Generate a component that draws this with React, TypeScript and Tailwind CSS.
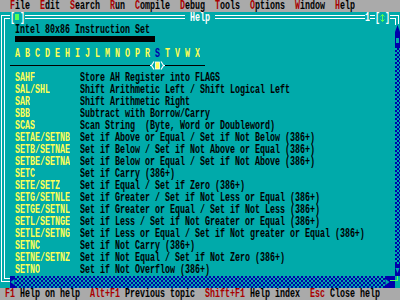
import React from "react";

function T({ children, className = "" }: { children: React.ReactNode; className?: string }) {
  return (
    <span
      className={`inline-block align-top whitespace-pre mt-[1.86px] h-[8.28px] leading-[8.28px] scale-y-[1.45] ${className}`}
    >
      {children}
    </span>
  );
}

function R({ children }: { children: React.ReactNode }) {
  return <span className="text-[#aa0000]">{children}</span>;
}

const entries: [string, string][] = [
  ["SAHF", "Store AH Register into FLAGS"],
  ["SAL/SHL", "Shift Arithmetic Left / Shift Logical Left"],
  ["SAR", "Shift Arithmetic Right"],
  ["SBB", "Subtract with Borrow/Carry"],
  ["SCAS", "Scan String  (Byte, Word or Doubleword)"],
  ["SETAE/SETNB", "Set if Above or Equal / Set if Not Below (386+)"],
  ["SETB/SETNAE", "Set if Below / Set if Not Above or Equal (386+)"],
  ["SETBE/SETNA", "Set if Below or Equal / Set if Not Above (386+)"],
  ["SETC", "Set if Carry (386+)"],
  ["SETE/SETZ", "Set if Equal / Set if Zero (386+)"],
  ["SETG/SETNLE", "Set if Greater / Set if Not Less or Equal (386+)"],
  ["SETGE/SETNL", "Set if Greater or Equal / Set if Not Less (386+)"],
  ["SETL/SETNGE", "Set if Less / Set if Not Greater or Equal (386+)"],
  ["SETLE/SETNG", "Set if Less or Equal / Set if Not greater or Equal (386+)"],
  ["SETNC", "Set if Not Carry (386+)"],
  ["SETNE/SETNZ", "Set if Not Equal / Set if Not Zero (386+)"],
  ["SETNO", "Set if Not Overflow (386+)"],
];

const checker =
  "bg-[image:repeating-conic-gradient(#0000aa_0%_25%,#00aaaa_0%_50%)] bg-[length:4px_4px]";

export default function App() {
  return (
    <div className="w-[400px] h-[300px] overflow-hidden bg-[#00aaaa] font-['Liberation_Mono',monospace] text-[8.333px] leading-[12px] font-bold flex flex-col">
      {/* menu bar */}
      <div className="h-[12px] shrink-0 bg-[#aaaaaa] text-black flex">
        <T>
          {"  "}<R>F</R>ile{"  "}<R>E</R>dit{"  "}<R>S</R>earch{"  "}<R>R</R>un{"  "}<R>C</R>ompile{"  "}<R>D</R>ebug{"  "}<R>T</R>ools{"  "}<R>O</R>ptions{"  "}<R>W</R>indow{"  "}<R>H</R>elp
        </T>
      </div>

      {/* top border */}
      <div className="h-[12px] shrink-0 flex text-white">
        <div className="w-[5px] shrink-0">
          <div className="ml-[1px] mt-[3px] w-[4px] h-[9px] border-l border-t border-white">
            <div className="ml-[2px] mt-[2px] w-[1px] h-[6px] border-l border-t border-white" />
          </div>
        </div>
        <div className="w-[5px] shrink-0 h-[4px] mt-[3px] border-y border-white" />
        <div className="w-[5px] shrink-0"><T>[</T></div>
        <div className="w-[5px] shrink-0">
          <div className="mt-[2px] w-[4px] h-[6px] bg-[#55ff55]" />
        </div>
        <div className="w-[5px] shrink-0"><T>]</T></div>
        <div className="w-[160px] shrink-0 h-[4px] mt-[3px] border-y border-white" />
        <div className="w-[30px] shrink-0"><T> Help </T></div>
        <div className="w-[150px] shrink-0 h-[4px] mt-[3px] border-y border-white" />
        <div className="w-[5px] shrink-0"><T>1</T></div>
        <div className="w-[5px] shrink-0 h-[4px] mt-[3px] border-y border-white" />
        <div className="w-[5px] shrink-0"><T>[</T></div>
        <div className="w-[5px] shrink-0">
          <svg width="5" height="12" viewBox="0 0 5 12">
            <path d="M2.5 2.5 L2.5 9.5 M0.5 4.5 L2.5 2.5 L4.5 4.5 M0.5 7.5 L2.5 9.5 L4.5 7.5" stroke="#55ff55" strokeWidth="1" fill="none" />
          </svg>
        </div>
        <div className="w-[5px] shrink-0"><T>]</T></div>
        <div className="w-[5px] shrink-0 h-[4px] mt-[3px] border-y border-white" />
        <div className="w-[5px] shrink-0">
          <div className="mt-[3px] w-[4px] h-[9px] border-t border-r border-white">
            <div className="mt-[2px] w-[1px] h-[7px] border-r border-white" />
          </div>
        </div>
      </div>

      {/* body */}
      <div className="h-[252px] shrink-0 flex">
        <div className="w-[5px] shrink-0">
          <div className="ml-[1px] w-[4px] h-full border-x border-white" />
        </div>
        <div className="w-[390px] shrink-0 flex flex-col pl-[10px]">
          <div className="h-[12px] text-black"><T>Intel 80x86 Instruction Set</T></div>
          <div className="h-[12px]"><div className="w-[140px] h-[6px] bg-black" /></div>
          <div className="h-[12px] text-[#ffff55]">
            <T>
              {"A B C D E H I J L M N O P R "}<span className="text-[#0000aa]">S</span>{" T V W X"}
            </T>
          </div>
          <div className="h-[12px] flex -ml-[5px]">
            <div className="w-[140px] h-[1px] mt-[5px] bg-black" />
            <svg width="15" height="12" viewBox="0 0 15 12" className="shrink-0">
              <path d="M0 5.5 L1 5.5 M4 1.5 L1.5 5.5 L4 9.5 M11 1.5 L13.5 5.5 L11 9.5 M14 5.5 L15 5.5" stroke="#ffffff" strokeWidth="1.2" fill="none" />
              <rect x="5.5" y="2" width="4" height="7" fill="#ffff55" stroke="#ffffff" strokeWidth="0.8" />
            </svg>
            <div className="w-[40px] h-[1px] mt-[5px] bg-black" />
          </div>
          {entries.map(([k, d]) => (
            <div key={k} className="h-[12px] flex">
              <div className="w-[65px] shrink-0"><T className="text-[#ffff55]">{k}</T></div>
              <T className="text-black">{d}</T>
            </div>
          ))}
        </div>
        <div className="w-[5px] shrink-0 flex flex-col">
          <div className="h-[12px] shrink-0">
            <svg width="5" height="12" viewBox="0 0 5 12">
              <path d="M2.5 1 L5 8 L0 8 Z" fill="#0000aa" />
              <rect x="0" y="8" width="5" height="4" fill="#0000aa" />
            </svg>
          </div>
          <div className="h-[12px] shrink-0 bg-[#0000aa]">
            <div className="ml-[1px] mt-[2px] w-[3px] h-[5px] bg-[#00aaaa]" />
          </div>
          <div className={`h-[216px] shrink-0 ${checker}`} />
          <div className="h-[12px] shrink-0 bg-[#0000aa]">
            <svg width="5" height="12" viewBox="0 0 5 12">
              <path d="M0.5 4 L4.5 4 L2.5 9 Z" fill="#00aaaa" />
            </svg>
          </div>
        </div>
      </div>

      {/* bottom border / horizontal scrollbar */}
      <div className="h-[12px] shrink-0 flex">
        <div className="w-[5px] shrink-0">
          <div className="ml-[1px] w-[4px] h-[6px] border-l border-b border-white">
            <div className="ml-[2px] w-[1px] h-[3px] border-l border-b border-white" />
          </div>
        </div>
        <div className="w-[5px] shrink-0 h-[4px] mt-[2px] border-y border-white" />
        <div className="w-[5px] shrink-0 bg-[#0000aa]">
          <svg width="5" height="12" viewBox="0 0 5 12">
            <path d="M4.5 3 L4.5 9 L0.5 6 Z" fill="#00aaaa" />
          </svg>
        </div>
        <div className={`w-[370px] shrink-0 ${checker}`} />
        <div className="w-[5px] shrink-0 bg-[#0000aa]">
          <svg width="5" height="12" viewBox="0 0 5 12">
            <path d="M0.5 3 L0.5 9 L4.5 6 Z" fill="#00aaaa" />
          </svg>
        </div>
        <div className="w-[5px] shrink-0 bg-[#0000aa]">
          <div className="mt-[4px] w-full h-[1px] bg-[#55ff55]" />
        </div>
        <div className="w-[5px] shrink-0 bg-[#00aaaa]">
          <div className="w-[3px] h-[5px] border-r border-b border-[#55ff55]" />
        </div>
      </div>

      {/* status bar */}
      <div className="h-[12px] shrink-0 bg-[#aaaaaa] text-black flex">
        <T>
          {" "}<R>F1</R>{" Help on help  "}<R>Alt+F1</R>{" Previous topic  "}<R>Shift+F1</R>{" Help index  "}<R>Esc</R>{" Close help"}
        </T>
      </div>
    </div>
  );
}
